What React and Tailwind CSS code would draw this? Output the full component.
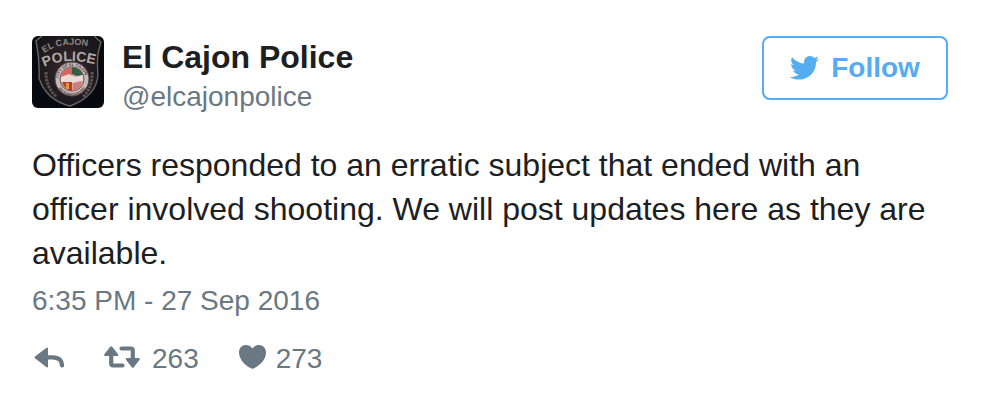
function Avatar() {
  return (
    <svg className="size-18 shrink-0 rounded-md" viewBox="0 0 72 72" role="img" aria-label="El Cajon Police badge">
      <defs>
        <path id="arc-city" d="M12 17 Q 22 10 35 9 Q 52 8 68 13" />
        <path id="arc-police" d="M12 31 Q 25 25 38 25 Q 54 25 72 31" />
        <path id="ring-top" d="M26 44 A 14 14 0 0 1 54 44" />
        <path id="ring-bottom" d="M24 44 A 16 16 0 0 0 56 44" />
        <radialGradient id="cloth" cx="50%" cy="50%" r="60%">
          <stop offset="0" stopColor="#352b2b" />
          <stop offset="1" stopColor="#16131a" />
        </radialGradient>
      </defs>
      <rect width="72" height="72" fill="#080a12" />
      <path d="M4 5 Q 10 0 14 -4 H 60 Q 64 3 69 6 Q 64 20 66 38 Q 65 60 38 70 Q 14 64 7 42 Q 8 24 4 5Z" fill="url(#cloth)" stroke="#6a6360" strokeWidth="1.4" />
      <g fill="none" stroke="#5d5654" strokeWidth="3" strokeDasharray="2.5 1">
        <path d="M14 36 Q 14 52 25 61" />
        <path d="M60 36 Q 61 51 51 61" />
      </g>
      <g fontFamily="'Liberation Sans', Arial, sans-serif" fontWeight="700">
        <text fontSize="9" fill="#8f8886"><textPath href="#arc-city">EL CAJON</textPath></text>
        <text fontSize="14" fill="#b0a9a7"><textPath href="#arc-police">POLICE</textPath></text>
        <circle cx="40" cy="43" r="17" fill="#c4bab7" stroke="#514341" strokeWidth="1" />
        <circle cx="40" cy="43" r="12" fill="#c9a9a1" stroke="#795452" strokeWidth="1" />
        <text fontSize="4" fill="#59383b"><textPath href="#ring-top" startOffset="2">CITY OF EL CAJON</textPath></text>
        <text fontSize="4" fill="#59383b"><textPath href="#ring-bottom" startOffset="9">INCORPORATED</textPath></text>
      </g>
      <path d="M30 38 Q 34 31 41 32 L 40 40 L 29 42Z" fill="#d9625c" />
      <path d="M40 31 Q 49 32 51 39 L 45 40 L 40 38Z" fill="#345f46" />
      <path d="M29 41 L 37 38 L 43 41 L 51 39 V 45 L 41 47 L 29 46Z" fill="#ead9d5" />
      <path d="M30 46 H 40 V 55 Q 33 54 30 46Z" fill="#bd3930" />
      <path d="M34 47 H 37 V 53 H 34Z" fill="#e39a35" />
      <path d="M41 47 L 50 45 Q 48 54 41 55Z" fill="#cf7d7c" />
    </svg>
  );
}

function Bird() {
  return (
    <svg className="h-6 w-[29px]" viewBox="5 9 64 52.500" fill="currentColor" aria-hidden="true">
      <path d="M68.812 15.140c-2.348 1.040-4.870 1.744-7.520 2.060 2.704-1.620 4.780-4.186 5.757-7.243-2.530 1.500-5.330 2.592-8.314 3.176C56.350 10.590 52.948 9 49.182 9c-7.230 0-13.092 5.860-13.092 13.093 0 1.026.118 2.020.338 2.980C25.543 24.527 15.900 19.318 9.440 11.396c-1.125 1.936-1.770 4.184-1.770 6.580 0 4.543 2.312 8.552 5.824 10.900-2.146-.070-4.165-.658-5.930-1.640-.002.056-.002.110-.002.163 0 6.345 4.513 11.638 10.504 12.840-1.100.298-2.256.457-3.450.457-.845 0-1.666-.078-2.464-.230 1.667 5.200 6.500 8.985 12.230 9.090-4.482 3.510-10.130 5.605-16.260 5.605-1.055 0-2.096-.060-3.122-.184 5.794 3.717 12.676 5.882 20.067 5.882 24.083 0 37.250-19.950 37.250-37.249 0-.566-.014-1.134-.040-1.694 2.560-1.845 4.780-4.150 6.536-6.774z" />
    </svg>
  );
}

function ReplyIcon() {
  return (
    <svg className="mb-1 h-6 w-[30px]" viewBox="0 -1 30 24" aria-hidden="true">
      <path d="M12.500 1.800 L1 10.600 Q0 11.400 1 12.200 L12.500 21.200 Q14 22 14 20.200 V2.800 Q14 1 12.500 1.800Z" fill="currentColor" />
      <path d="M12 11.400 H18.500 Q28 11.400 28 19.500" fill="none" stroke="currentColor" strokeWidth="4.200" strokeLinecap="round" />
    </svg>
  );
}

function RetweetIcon() {
  return (
    <svg className="mb-1 h-6 w-9" viewBox="0 -0.500 36 24" aria-hidden="true">
      <path d="M6.200 1.200 Q7.200.100 8.200 1.200 L13.800 8.400 Q15 10.400 13 10.600 H1.400 Q-.600 10.400.600 8.400Z" fill="currentColor" />
      <path d="M29.800 21.800 Q28.800 22.900 27.800 21.800 L22.200 14.600 Q21 12.600 23 12.400 H34.600 Q36.600 12.600 35.400 14.600Z" fill="currentColor" />
      <path d="M7.200 9.500 V18 Q7.200 20 9.200 20 H18.500" fill="none" stroke="currentColor" strokeWidth="4.200" strokeLinecap="round" />
      <path d="M17.500 3 H26.800 Q28.800 3 28.800 5 V13.500" fill="none" stroke="currentColor" strokeWidth="4.200" strokeLinecap="round" />
    </svg>
  );
}

function HeartIcon() {
  return (
    <svg className="mb-1 h-6 w-[27px]" viewBox="0 0 27 24" fill="currentColor" aria-hidden="true">
      <path d="M13.500 3.600 C15.300 1 17.500 0 20 0 C24 0 27 3 27 7.500 C27 14.500 20.500 21 14.300 23.600 Q13.500 24 12.700 23.600 C6.500 21 0 14.500 0 7.500 C0 3 3 0 7 0 C9.500 0 11.700 1 13.500 3.600Z" />
    </svg>
  );
}

export default function App() {
  return (
    <article className="min-h-screen bg-white px-8 pt-9 pb-5 font-['Liberation_Sans',Arial,sans-serif] text-[#1c2022]">
      <header className="flex items-start justify-between pr-1">
        <a href="#profile" className="flex gap-[18px]">
          <Avatar />
          <span className="flex flex-col">
            <span className="text-[32px] leading-[42px] font-bold">El Cajon Police</span>
            <span className="text-[28px] leading-[38px] text-[#697882]">@elcajonpolice</span>
          </span>
        </a>
        <button type="button" className="flex h-16 w-[186px] cursor-pointer items-center justify-center gap-3 rounded-lg border-2 border-[#55acee] text-[28px] font-bold text-[#55acee]">
          <Bird />
          Follow
        </button>
      </header>
      <p className="mt-[27px] text-[32px] leading-[44px]">
        Officers responded to an erratic subject that ended with an officer involved shooting. We will post updates here as they are available.
      </p>
      <div className="mt-1.5 text-[28px] leading-10 text-[#697882]">
        <time dateTime="2016-09-27T18:35">6:35 PM - 27 Sep 2016</time>
      </div>
      <footer className="mt-[18px] flex items-center gap-10 pl-[2px] text-[28px] leading-10 text-[#697882]">
        <button type="button" aria-label="Reply" className="cursor-pointer">
          <ReplyIcon />
        </button>
        <button type="button" aria-label="263 retweets" className="flex cursor-pointer items-center gap-3">
          <RetweetIcon />
          263
        </button>
        <button type="button" aria-label="273 likes" className="flex cursor-pointer items-center gap-[10px]">
          <HeartIcon />
          273
        </button>
      </footer>
    </article>
  );
}
